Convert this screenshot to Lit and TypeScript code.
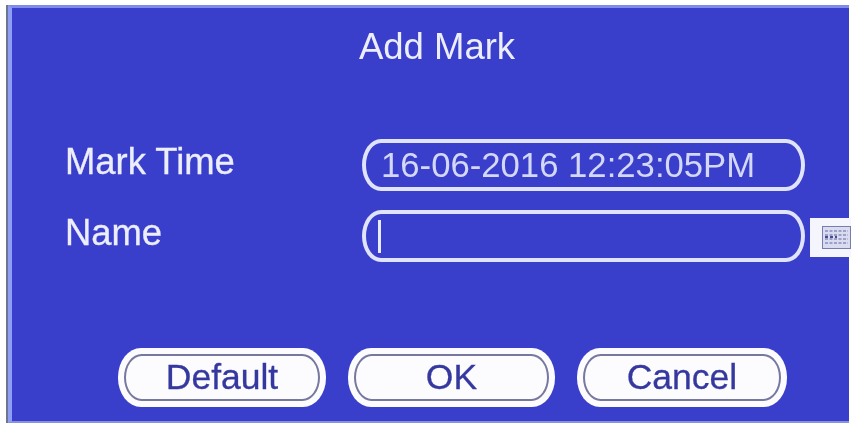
import { LitElement, html, css } from "lit";
import { customElement } from "lit/decorators.js";

@customElement("app-root")
export class AppRoot extends LitElement {
  static styles = css`
    :host { display: block; width: 851px; height: 426px; background: #fff; overflow: hidden; font-family: "Liberation Sans", Arial, sans-serif; }
    .frame { box-sizing: border-box; margin-left: 6px; margin-top: 5px; width: 843px; height: 418px; border-left: 2px solid #6d7590; filter: blur(0.6px); }
    .panel { box-sizing: border-box; height: 100%; background: #3a3fcb; border-left: 4px solid #8f9ef5; border-top: 3px solid #7f8bea; border-bottom: 2px solid #8a90e0; display: flex; flex-direction: column; color: #eceefd; }
    .title { height: 78px; display: flex; align-items: center; justify-content: center; padding-left: 13px; font-size: 36.5px; box-sizing: border-box; }
    .form { margin-top: 53px; padding-left: 53px; display: grid; grid-template-columns: 297px 443px auto; row-gap: 19px; align-items: center; }
    .label { font-size: 36.4px; line-height: 40px; margin-top: -7px; -webkit-text-stroke: 0.3px #eceefd; }
    .field { box-sizing: border-box; height: 52px; border: 4px solid #dfe3fb; border-radius: 19px / 26px; display: flex; align-items: center; padding-left: 15px; font-size: 34.7px; color: #d4d8f8; white-space: nowrap; }
    .caret { width: 3px; height: 33px; background: #e8ebfd; margin-left: -3px; }
    .kbd { width: 41px; height: 39px; margin-left: 5px; background: #f4f5fd; display: flex; align-items: center; justify-content: flex-end; margin-top: 2px; }
    .buttons { margin-top: auto; margin-bottom: 14px; padding-left: 106px; display: flex; gap: 22px; }
    .btn { box-sizing: border-box; height: 59px; padding: 6px; background: #fcfcff; border-radius: 23px / 29px; display: flex; }
    .btn span { flex: 1; border: 2px solid #77789f; border-radius: 18px / 24px; display: flex; align-items: center; justify-content: center; font-size: 35.5px; color: #35399f; -webkit-text-stroke: 0.3px #35399f; }
    .b1 { width: 208px; } .b2 { width: 207px; } .b3 { width: 210px; }
  `;
  render() {
    return html`<div class="frame"><div class="panel">
      <div class="title">Add Mark</div>
      <div class="form">
        <div class="label">Mark Time</div>
        <div class="field">16-06-2016 12:23:05PM</div>
        <div></div>
        <div class="label">Name</div>
        <div class="field"><div class="caret"></div></div>
        <div class="kbd">
          <svg width="29" height="23" viewBox="0 0 29 23">
            <rect x="0.5" y="0.5" width="28" height="22" fill="#d9dbef" stroke="#7a7cb0"/>
            <path d="M3 5h23M3 9h23M3 13h23M3 17h23" stroke="#8a8cc0" stroke-width="1.5" stroke-dasharray="3 1.5"/>
            <path d="M3 11h12" stroke="#4a4c90" stroke-width="2" stroke-dasharray="3 2"/>
          </svg>
        </div>
      </div>
      <div class="buttons">
        <div class="btn b1"><span>Default</span></div>
        <div class="btn b2"><span>OK</span></div>
        <div class="btn b3"><span>Cancel</span></div>
      </div>
    </div></div>`;
  }
}
